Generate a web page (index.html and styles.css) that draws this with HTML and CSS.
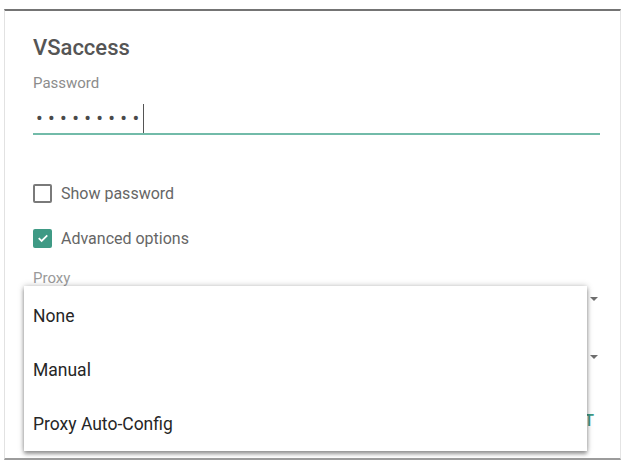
FILE: index.html
```html
<!DOCTYPE html>
<html lang="en">
<head>
<meta charset="utf-8">
<title>VSaccess</title>
<link rel="stylesheet" href="styles.css">
</head>
<body>
<div class="card">
  <h1 class="title">VSaccess</h1>
  <div class="label">Password</div>
  <div class="input"><span class="dots">•••••••••</span><span class="caret"></span></div>

  <div class="check check-first"><span class="box"></span><span class="check-text">Show password</span></div>
  <div class="check check-second"><span class="box checked"><svg viewBox="0 0 18 18" width="14" height="14"><path d="M3.5 9.2 L7.2 12.8 L14.5 5.5" fill="none" stroke="#fff" stroke-width="2.2"/></svg></span><span class="check-text">Advanced options</span></div>

  <div class="label proxy-label">Proxy</div>
  <div class="select"><span class="arrow"></span></div>
  <div class="select select-second"><span class="arrow"></span></div>
  <div class="actions"><span class="btn">CONNECT</span></div>

  <ul class="menu">
    <li class="item">None</li>
    <li class="item">Manual</li>
    <li class="item">Proxy Auto-Config</li>
  </ul>
</div>
</body>
</html>
```
FILE: styles.css
```css
html, body {
  margin: 0;
  padding: 0;
  background: #fff;
}
body {
  font-family: Roboto, "Liberation Sans", Arial, sans-serif;
  width: 623px;
  height: 462px;
  overflow: hidden;
}
.card {
  position: relative;
  box-sizing: border-box;
  margin: 9px 0 0 4px;
  width: 617px;
  height: 451px;
  padding: 25px 20px 0 28px;
  border-top: 2px solid #747474;
  border-left: 1px solid #e2e2e2;
  border-right: 1px solid #e4e4e4;
  border-bottom: 2px solid #9c9c9c;
}
.title {
  margin: 0;
  font-size: 22px;
  line-height: 24px;
  font-weight: 500;
  color: #555;
}
.label {
  margin-top: 14px;
  font-size: 15px;
  line-height: 18px;
  color: #8c8c8c;
}
.input {
  display: flex;
  align-items: center;
  box-sizing: border-box;
  height: 43px;
  padding-top: 11px;
  border-bottom: 2px solid #72bba9;
}
.dots {
  font-size: 20px;
  line-height: 29px;
  letter-spacing: 5.3px;
  color: #4a4a4a;
  padding-left: 3px;
}
.caret {
  width: 1px;
  height: 29px;
  background: #555;
  margin-left: -1px;
}
.check {
  display: flex;
  align-items: center;
  height: 24px;
  gap: 9px;
}
.check-first { margin-top: 46px; }
.check-second { margin-top: 21px; }
.box {
  box-sizing: border-box;
  width: 19px;
  height: 19px;
  border: 2px solid #7a7a7a;
  border-radius: 2px;
  display: flex;
  align-items: center;
  justify-content: center;
}
.box.checked {
  background: #3f9a85;
  border-color: #3f9a85;
}
.check-text {
  font-size: 16px;
  color: #666;
}
.proxy-label {
  margin-top: 19px;
  color: #9a9a9a;
}
.select {
  position: relative;
  height: 24px;
}
.select-second { margin-top: 34px; }
.arrow {
  position: absolute;
  right: 2px;
  top: 10px;
  width: 0;
  height: 0;
  border-left: 4px solid transparent;
  border-right: 4px solid transparent;
  border-top: 4px solid #6e6e6e;
}
.actions {
  margin-top: 38px;
  display: flex;
  justify-content: flex-end;
}
.btn {
  font-size: 16px;
  line-height: 28px;
  font-weight: 500;
  color: #3f9a85;
  padding-right: 6px;
}
.menu {
  position: absolute;
  left: 19px;
  top: 275px;
  width: 563px;
  margin: 0;
  padding: 3px 0 0;
  list-style: none;
  background: #fff;
  box-shadow: 0 3px 4px rgba(0, 0, 0, 0.35), 0 0 6px rgba(0, 0, 0, 0.25);
}
.item {
  height: 54px;
  line-height: 54px;
  padding-left: 9px;
  font-size: 17.5px;
  color: #262626;
}
```
